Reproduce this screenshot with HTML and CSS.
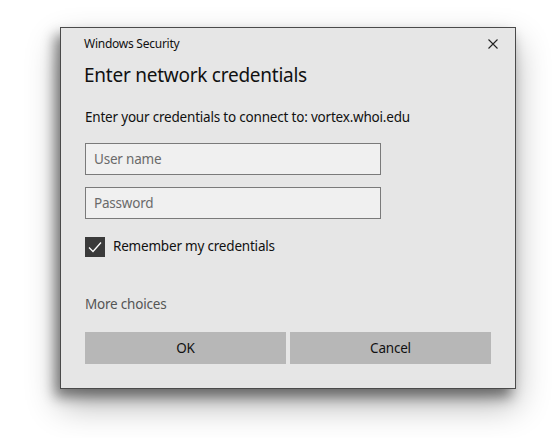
FILE: index.html
```html
<!DOCTYPE html>
<html lang="en">
<head>
<meta charset="utf-8">
<title>Windows Security</title>
<link rel="stylesheet" href="styles.css">
</head>
<body>
<div class="page">
<div class="dialog">
  <div class="header">
    <span class="app">Windows Security</span>
    <svg class="close" width="10" height="10" viewBox="0 0 10 10"><path d="M0.5 0.5 L9.5 9.5 M9.5 0.5 L0.5 9.5" stroke="#222" stroke-width="1.1" fill="none"/></svg>
  </div>
  <div class="title">Enter network credentials</div>
  <div class="msg">Enter your credentials to connect to: vortex.whoi.edu</div>
  <div class="field">User name</div>
  <div class="field second">Password</div>
  <div class="check-row">
    <span class="box"><svg width="20" height="20" viewBox="0 0 20 20"><path d="M4 10.5 L8 14.5 L16 5.5" stroke="#fff" stroke-width="1.3" fill="none"/></svg></span>
    <span class="label">Remember my credentials</span>
  </div>
  <div class="more">More choices</div>
  <div class="buttons">
    <div class="btn">OK</div>
    <div class="btn">Cancel</div>
  </div>
</div>
</div>
</body>
</html>
```

FILE: styles.css
```css
html, body {
  margin: 0;
  padding: 0;
  background: #ffffff;
  height: 100%;
}
body {
  font-family: "Noto Sans", "Open Sans", "Liberation Sans", sans-serif;
  color: #1a1a1a;
}
.page {
  box-sizing: border-box;
  min-height: 100%;
  padding: 27px 0 0 60px;
}
.dialog {
  box-sizing: border-box;
  width: 456px;
  height: 362px;
  border: 1px solid #4a4a4a;
  background: #e6e6e6;
  box-shadow: -5px 8px 12px rgba(0, 0, 0, 0.45), 0 16px 32px rgba(0, 0, 0, 0.3);
  padding: 8px 24px 0 24px;
  display: flex;
  flex-direction: column;
}
.header {
  display: flex;
  justify-content: space-between;
  align-items: center;
  height: 16px;
  margin-left: -1px;
  margin-right: -7px;
}
.app {
  font-size: 12px;
  line-height: 16px;
  letter-spacing: -0.25px;
  color: #111;
}
.close {
  display: block;
}
.title {
  margin-top: 9px;
  margin-left: -1px;
  font-size: 19px;
  line-height: 28px;
  letter-spacing: -0.25px;
  color: #111;
}
.msg {
  margin-top: 18px;
  font-size: 13.5px;
  line-height: 20px;
  letter-spacing: -0.2px;
  color: #111;
}
.field {
  box-sizing: border-box;
  width: 296px;
  height: 32px;
  margin-top: 16px;
  border: 1px solid #7a7a7a;
  background: #f0f0f0;
  padding-left: 8px;
  font-size: 13.5px;
  line-height: 30px;
  letter-spacing: -0.2px;
  color: #6a6a6a;
}
.field.second {
  margin-top: 12px;
}
.check-row {
  margin-top: 18px;
  display: flex;
  align-items: center;
  height: 20px;
}
.box {
  width: 20px;
  height: 20px;
  background: #3a3a3a;
  display: block;
}
.box svg {
  display: block;
}
.label {
  margin-left: 8px;
  font-size: 13.5px;
  line-height: 20px;
  letter-spacing: -0.2px;
  color: #111;
  position: relative;
  top: -1px;
}
.more {
  margin-top: 37px;
  font-size: 13.5px;
  line-height: 20px;
  letter-spacing: -0.2px;
  color: #555;
}
.buttons {
  margin-top: 18px;
  display: flex;
  gap: 4px;
}
.btn {
  flex: 1;
  height: 32px;
  background: #b7b7b7;
  text-align: center;
  font-size: 13.5px;
  line-height: 32px;
  letter-spacing: -0.2px;
  color: #111;
}
```
